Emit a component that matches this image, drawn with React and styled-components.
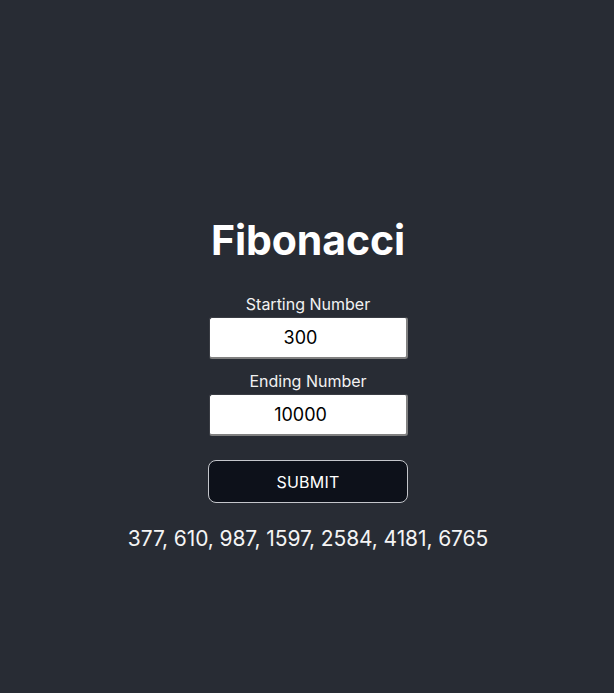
import React, { useState } from "react";
import styled, { createGlobalStyle } from "styled-components";

const Global = createGlobalStyle`
  html, body {
    margin: 0;
    padding: 0;
    background: #282c34;
  }
  body {
    font-family: Inter, "Noto Sans", sans-serif;
    color: #fff;
  }
`;

const Page = styled.main`
  min-height: 693px;
  display: flex;
  flex-direction: column;
  align-items: center;
  padding: 214px 0 0 2px;
  box-sizing: border-box;
`;

const Title = styled.h1`
  margin: 0 0 28px;
  font-size: 41px;
  font-weight: 700;
  line-height: 52px;
  letter-spacing: -0.1px;
`;

const Form = styled.form`
  display: flex;
  flex-direction: column;
  align-items: center;
`;

const Field = styled.label`
  display: flex;
  flex-direction: column;
  align-items: center;
  margin-bottom: ${(p) => p.$gap}px;
  font-size: 16px;
  line-height: 20px;
  color: #f2f2f2;
`;

const Input = styled.input`
  margin-top: 3px;
  width: 199px;
  height: 42px;
  box-sizing: border-box;
  padding: 0 16px 0 2px;
  border-style: solid;
  border-width: 1px 2px 2px 1px;
  border-color: #3a3d44 #808080 #808080 #3a3d44;
  border-radius: 3px;
  background: #fff;
  color: #000;
  font-family: Inter, "Noto Sans", sans-serif;
  font-size: 18px;
  text-align: center;
  outline: none;
`;

const Button = styled.button`
  width: 200px;
  height: 43px;
  border: 1px solid #c4c6cb;
  border-radius: 8px;
  background: #0d111a;
  color: #fff;
  font-family: Inter, "Noto Sans", sans-serif;
  font-size: 16px;
  letter-spacing: 0.2px;
  cursor: pointer;
`;

const Result = styled.p`
  margin: 23px 0 0;
  font-size: 21px;
  line-height: 26px;
  color: #f4f4f4;
  letter-spacing: -0.1px;
`;

function fib(start, end) {
  const out = [];
  let a = 0;
  let b = 1;
  while (a <= end) {
    if (a >= start) out.push(a);
    [a, b] = [b, a + b];
  }
  return out;
}

export default function App() {
  const [start, setStart] = useState("300");
  const [end, setEnd] = useState("10000");
  const [result, setResult] = useState(fib(300, 10000));

  const onSubmit = (e) => {
    e.preventDefault();
    setResult(fib(Number(start), Number(end)));
  };

  return (
    <>
      <Global />
      <Page>
        <Title>Fibonacci</Title>
        <Form onSubmit={onSubmit}>
          <Field $gap={12}>
            Starting Number
            <Input value={start} onChange={(e) => setStart(e.target.value)} />
          </Field>
          <Field $gap={24}>
            Ending Number
            <Input value={end} onChange={(e) => setEnd(e.target.value)} />
          </Field>
          <Button type="submit">SUBMIT</Button>
        </Form>
        <Result>{result.join(", ")}</Result>
      </Page>
    </>
  );
}
